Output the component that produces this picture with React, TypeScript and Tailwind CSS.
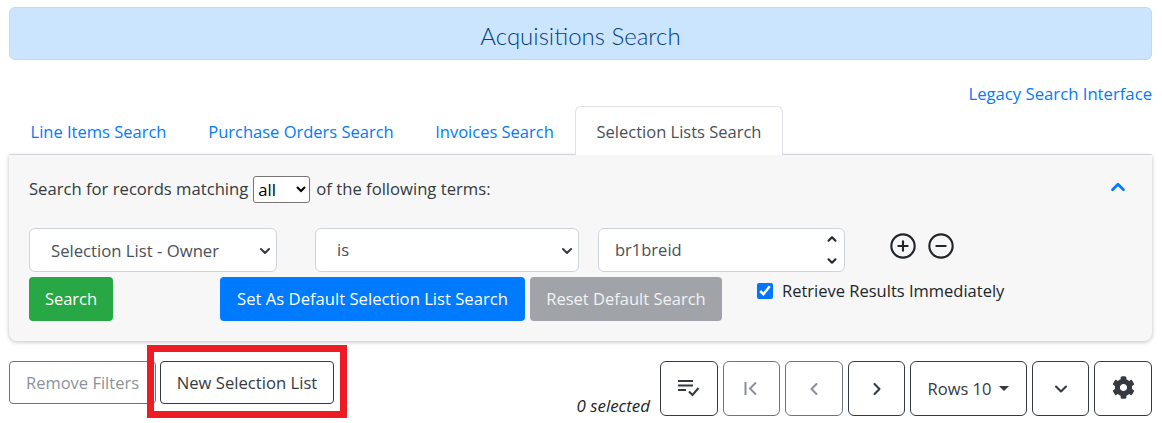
import React from "react";
import { FaCog } from "react-icons/fa";
import { FiChevronDown, FiChevronLeft, FiChevronRight, FiChevronUp } from "react-icons/fi";
import { CirclePlus, CircleMinus } from "lucide-react";

const pagerBtn =
  "h-[55px] flex items-center justify-center rounded-md border bg-white text-[#343a40]";

const ListCheck = () => (
  <svg width="24" height="24" viewBox="0 0 24 24" fill="none" stroke="#343a40" strokeWidth="2">
    <path d="M1 4h15M1 8.500h15M1 13h8" />
    <path d="M12 14.500l3.500 3.500 6-7" />
  </svg>
);

const FirstPage = () => (
  <svg width="20" height="20" viewBox="0 0 20 20" fill="none" stroke="#8a9096" strokeWidth="2">
    <path d="M3.500 3v13M14 3.500l-6 6 6 6" />
  </svg>
);

const App = () => {
  return (
    <div className="w-[1162px] h-[423px] overflow-hidden bg-white pl-[9px] pr-[10px] pt-[7px] font-['Open_Sans','Liberation_Sans',sans-serif] text-[16.5px] text-[#343a40]">
      <div className="h-[53px] flex items-center justify-center rounded-md border border-[#b8daff] bg-[#cce5ff] pt-[4px] font-['Lato',sans-serif] text-[24px] font-light text-[#004085]">
        Acquisitions Search
      </div>

      <div className="mt-[22px] h-[24px] flex items-center justify-end text-[16.7px] text-[#007bff]">
        <a href="#">Legacy Search Interface</a>
      </div>

      <div className="flex h-[49px] border-b border-[#dee2e6] text-[#007bff]">
        <a href="#" className="w-[179px] flex items-center justify-center pt-[5px]">Line Items Search</a>
        <a href="#" className="w-[226px] flex items-center justify-center pt-[5px]">Purchase Orders Search</a>
        <a href="#" className="w-[161px] flex items-center justify-center pt-[5px]">Invoices Search</a>
        <a href="#" className="w-[208px] h-[49px] flex items-center justify-center rounded-t-md border border-b-0 border-[#dee2e6] bg-white pt-[3px] text-[#495057]">
          Selection Lists Search
        </a>
      </div>

      <div className="h-[186px] rounded-b-lg bg-[#f7f7f7] px-5 pt-[21px] shadow-[0_1px_4px_rgba(0,0,0,0.25)]">
        <div className="flex h-[27px] items-center justify-between">
          <div className="flex items-center text-[16.65px]">
            <span>Search for records matching</span>
            <select className="ml-[5px] mr-[6px] h-[27px] w-[57px] rounded-[3px] border border-[#767676] bg-white text-black">
              <option>all</option>
            </select>
            <span>of the following terms:</span>
          </div>
          <FiChevronUp size={22} strokeWidth={3} className="mr-[3px] -mt-[5px] text-[#007bff]" />
        </div>

        <div className="mt-[25px] flex h-[44px]">
          <div className="relative w-[248px] flex items-center rounded-md border border-[#ced4da] bg-white pl-[21px] pt-px text-[16.7px] text-[#495057]">
            Selection List - Owner
            <FiChevronDown size={16} strokeWidth={3} className="absolute right-[3px] top-[14px] text-[#343a40]" />
          </div>
          <div className="relative ml-[38px] w-[264px] flex items-center rounded-md border border-[#ced4da] bg-white pl-[21px] pt-px text-[#495057]">
            is
            <FiChevronDown size={16} strokeWidth={3} className="absolute right-[3px] top-[14px] text-[#343a40]" />
          </div>
          <div className="relative ml-[19px] w-[247px] flex items-center rounded-md border border-[#ced4da] bg-white pl-4 pt-px text-[#495057]">
            br1breid
            <FiChevronUp size={14} strokeWidth={3.5} className="absolute right-[5px] top-[3px] text-[#212529]" />
            <FiChevronDown size={14} strokeWidth={3.5} className="absolute right-[5px] bottom-[3px] text-[#212529]" />
          </div>
          <div className="ml-[44px] flex h-[36px] items-center gap-[10px] text-[#212529]">
            <CirclePlus size={28} strokeWidth={1.8} />
            <CircleMinus size={28} strokeWidth={1.8} />
          </div>
        </div>

        <div className="mt-[5px] flex items-start">
          <button className="h-[44px] w-[84px] rounded bg-[#28a745] text-white">Search</button>
          <button className="ml-[107px] h-[44px] w-[305px] rounded bg-[#007bff] text-[16.65px] text-white">
            Set As Default Selection List Search
          </button>
          <button className="ml-[5px] h-[44px] w-[192px] rounded bg-[#a0a4a9] text-[#f1f2f3]">
            Reset Default Search
          </button>
          <label className="ml-[35px] mt-[2px] flex h-[24px] items-center gap-[9px] text-[#212529]">
            <input type="checkbox" defaultChecked readOnly className="h-4 w-4 accent-[#0075ff]" />
            Retrieve Results Immediately
          </label>
        </div>
      </div>

      <div className="mt-5 flex items-start justify-between">
        <div className="flex">
          <button className="h-[43px] w-[147px] rounded border border-[#6c757d] bg-white pt-px text-[#8c9298]">
            Remove Filters
          </button>
          <div className="relative ml-1">
            <button className="h-[43px] w-[174px] rounded border border-[#343a40] bg-white pt-px text-[16.65px] text-[#343a40]">
              New Selection List
            </button>
            <div className="absolute -left-[13px] -top-[16px] h-[73px] w-[200px] border-[7px] border-[#ed1c24]" />
          </div>
        </div>

        <div className="flex h-[55px] items-start">
          <span className="mr-[10px] self-end translate-y-[2px] text-[16.9px] text-[#212529] italic">0 selected</span>
          <div className="flex gap-[5px]">
            <button className={`${pagerBtn} w-[58px] border-[#343a40]`}><ListCheck /></button>
            <button className={`${pagerBtn} w-[57px] border-[#6c757d]`}><FirstPage /></button>
            <button className={`${pagerBtn} w-[58px] border-[#6c757d]`}><FiChevronLeft size={20} strokeWidth={2.5} className="text-[#8a9096]" /></button>
            <button className={`${pagerBtn} w-[57px] border-[#343a40]`}><FiChevronRight size={20} strokeWidth={2.5} /></button>
            <button className={`${pagerBtn} w-[117px] border-[#343a40] pt-[2px]`}>
              Rows 10
              <span className="ml-2 -mt-[2px] h-0 w-0 border-x-[5px] border-t-[5px] border-x-transparent border-t-[#343a40]" />
            </button>
            <button className={`${pagerBtn} w-[57px] border-[#343a40]`}><FiChevronDown size={20} strokeWidth={2.5} /></button>
            <button className={`${pagerBtn} w-[58px] border-[#343a40]`}><FaCog size={23} className="-mt-[2px]" /></button>
          </div>
        </div>
      </div>
    </div>
  );
};

export default App;
